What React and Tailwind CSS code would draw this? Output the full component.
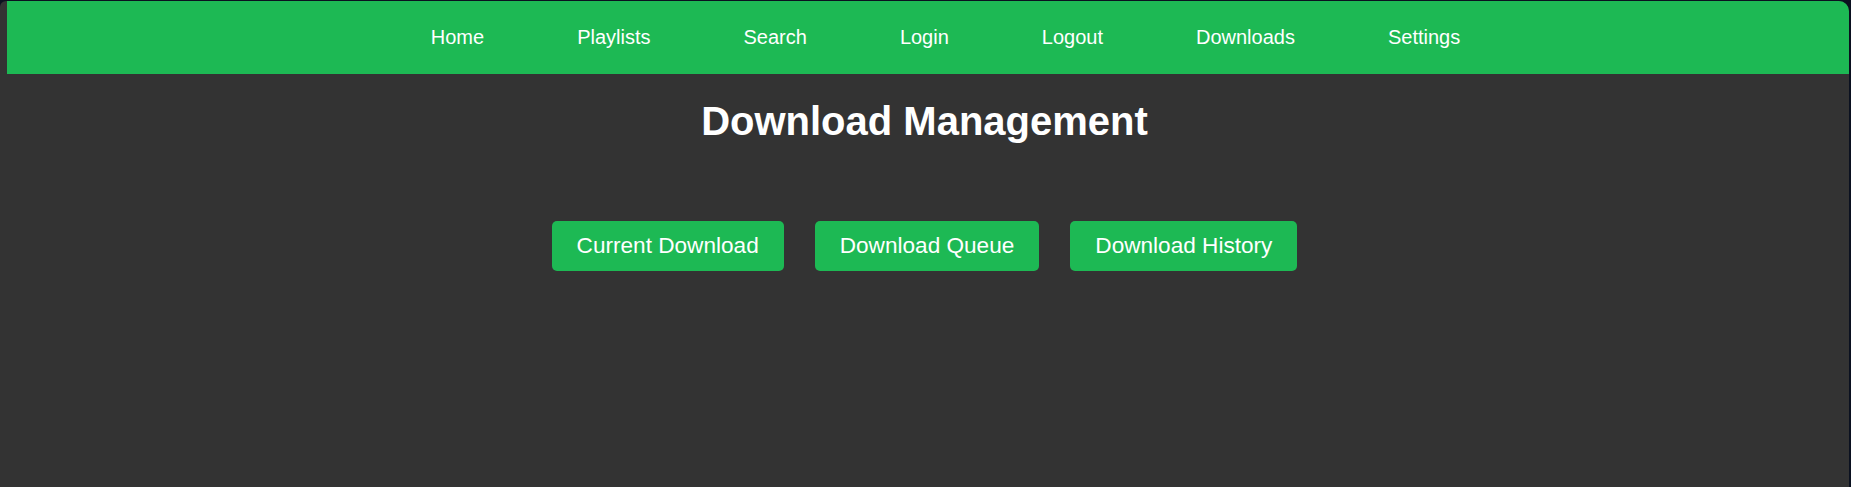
export default function App() {
  const links = ["Home", "Playlists", "Search", "Login", "Logout", "Downloads", "Settings"];
  const buttons = ["Current Download", "Download Queue", "Download History"];
  return (
    <div
      className="h-[487px] w-full bg-[#0b1120] pt-px pr-[2px] overflow-hidden"
      style={{ fontFamily: '"Liberation Sans", Arial, sans-serif' }}
    >
      <div className="h-full bg-[#333333] rounded-tl-[6px] rounded-tr-[10px] flex flex-col">
        <nav className="ml-[7px] h-[73px] bg-[#1db954] rounded-tr-[10px] flex items-center justify-center gap-[93px] pl-[35px]">
          {links.map((l) => (
            <a key={l} href="#" className="text-white text-[20px] leading-[23px]">
              {l}
            </a>
          ))}
        </nav>
        <h1 className="mt-[24px] text-center text-white font-bold text-[40px] leading-[46px]">
          Download Management
        </h1>
        <div className="mt-[77px] flex justify-center gap-[31px]">
          {buttons.map((b) => (
            <button
              key={b}
              className="bg-[#1db954] text-white text-[22.6px] leading-[26px] px-[25px] py-[12px] rounded-[5px]"
            >
              {b}
            </button>
          ))}
        </div>
      </div>
    </div>
  );
}
